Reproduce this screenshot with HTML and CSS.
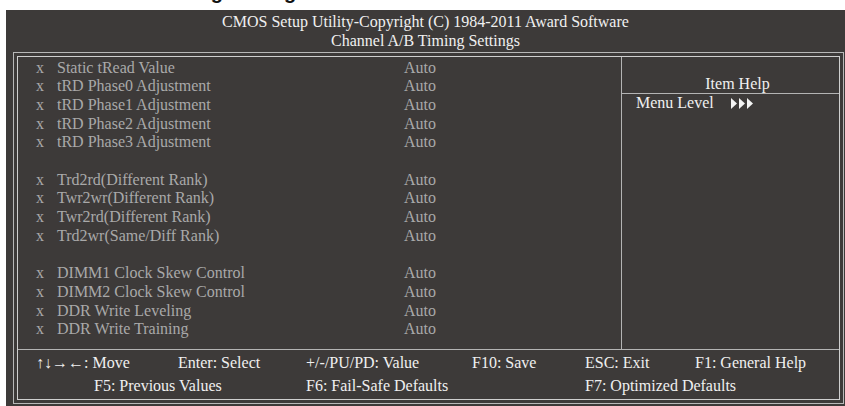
FILE: index.html
```html
<!DOCTYPE html>
<html lang="en">
<head>
    <meta charset="UTF-8">
    <title>Channel A/B Timing Settings</title>
    <link rel="stylesheet" href="styles.css">
</head>
<body>
    <div class="caption"><span>Channel A/B Timing Settings</span></div>

    <div class="screen">
        <div class="title">
            <div>CMOS Setup Utility-Copyright (C) 1984-2011 Award Software</div>
            <div>Channel A/B Timing Settings</div>
        </div>

        <div class="frame">
            <div class="inner">
                <div class="main">
                    <div class="items">
                        <div class="row"><span>x</span><span>Static tRead Value</span><span>Auto</span></div>
                        <div class="row"><span>x</span><span>tRD Phase0 Adjustment</span><span>Auto</span></div>
                        <div class="row"><span>x</span><span>tRD Phase1 Adjustment</span><span>Auto</span></div>
                        <div class="row"><span>x</span><span>tRD Phase2 Adjustment</span><span>Auto</span></div>
                        <div class="row"><span>x</span><span>tRD Phase3 Adjustment</span><span>Auto</span></div>
                        <div class="blank"></div>
                        <div class="row"><span>x</span><span>Trd2rd(Different Rank)</span><span>Auto</span></div>
                        <div class="row"><span>x</span><span>Twr2wr(Different Rank)</span><span>Auto</span></div>
                        <div class="row"><span>x</span><span>Twr2rd(Different Rank)</span><span>Auto</span></div>
                        <div class="row"><span>x</span><span>Trd2wr(Same/Diff Rank)</span><span>Auto</span></div>
                        <div class="blank"></div>
                        <div class="row"><span>x</span><span>DIMM1 Clock Skew Control</span><span>Auto</span></div>
                        <div class="row"><span>x</span><span>DIMM2 Clock Skew Control</span><span>Auto</span></div>
                        <div class="row"><span>x</span><span>DDR Write Leveling</span><span>Auto</span></div>
                        <div class="row"><span>x</span><span>DDR Write Training</span><span>Auto</span></div>
                    </div>

                    <div class="help">
                        <div class="help-title">Item Help</div>
                        <div class="help-body">
                            <span>Menu Level</span>
                            <svg class="level" width="22" height="11" viewBox="0 0 22 11">
                                <polygon points="0,0 6,5.5 0,11"/>
                                <polygon points="8,0 14,5.5 8,11"/>
                                <polygon points="16,0 22,5.5 16,11"/>
                            </svg>
                        </div>
                    </div>
                </div>

                <div class="keys">
                    <span>↑↓→←: Move</span>
                    <span>Enter: Select</span>
                    <span>+/-/PU/PD: Value</span>
                    <span>F10: Save</span>
                    <span>ESC: Exit</span>
                    <span>F1: General Help</span>
                    <span class="f5">F5: Previous Values</span>
                    <span class="f6">F6: Fail-Safe Defaults</span>
                    <span class="f7">F7: Optimized Defaults</span>
                </div>
            </div>
        </div>
    </div>
</body>
</html>
```

FILE: styles.css
```css
body {
    margin: 0;
    background-color: #fff;
    font-family: "Liberation Serif", "Times New Roman", serif;
    font-size: 16px;
    width: 845px;
    height: 406px;
    overflow: hidden;
}

.caption {
    height: 10px;
    overflow: hidden;
}

.caption span {
    display: block;
    margin-top: -18px;
    padding-left: 34px;
    font-family: "Liberation Sans", Arial, sans-serif;
    font-weight: bold;
    font-size: 20px;
    line-height: 20px;
    color: #111;
    white-space: nowrap;
}

.screen {
    margin-left: 6px;
    height: 396px;
    background-color: #3d3a39;
    color: #f0f0f0;
    overflow: hidden;
}

.title {
    padding-top: 2px;
    line-height: 19px;
    text-align: center;
}

.frame {
    margin: 2px 1px 2px 7px;
    border: 1px solid #b8b8b8;
    padding: 3px;
}

.inner {
    border: 1px solid #cfcfcf;
}

.main {
    display: flex;
    height: 292px;
}

.items {
    width: 604px;
    box-sizing: border-box;
    border-right: 1px solid #b4b4b4;
    padding: 1.5px 0 0 18px;
    color: #a9a9a9;
    line-height: 18.7px;
}

.row {
    display: grid;
    grid-template-columns: 21px 347px auto;
    white-space: nowrap;
}

.blank {
    height: 18.7px;
}

.help {
    flex: 1;
}

.help-title {
    height: 18px;
    padding: 18px 0 0 14px;
    line-height: 18px;
    text-align: center;
    border-bottom: 1px solid #b4b4b4;
}

.help-body {
    display: flex;
    align-items: center;
    gap: 17px;
    padding-left: 14px;
    line-height: 18px;
}

.level {
    fill: #f4f4f4;
}

.keys {
    display: grid;
    grid-template-columns: 142px 128px 166px 113px 110px auto;
    border-top: 1px solid #b4b4b4;
    height: 46px;
    padding: 3px 0 0 18px;
    line-height: 19px;
    white-space: nowrap;
}

.keys .f5 {
    grid-column: 1 / span 2;
    padding-left: 58px;
}

.keys .f6 {
    grid-column: 3 / span 2;
}

.keys .f7 {
    grid-column: 5 / span 2;
}
```
